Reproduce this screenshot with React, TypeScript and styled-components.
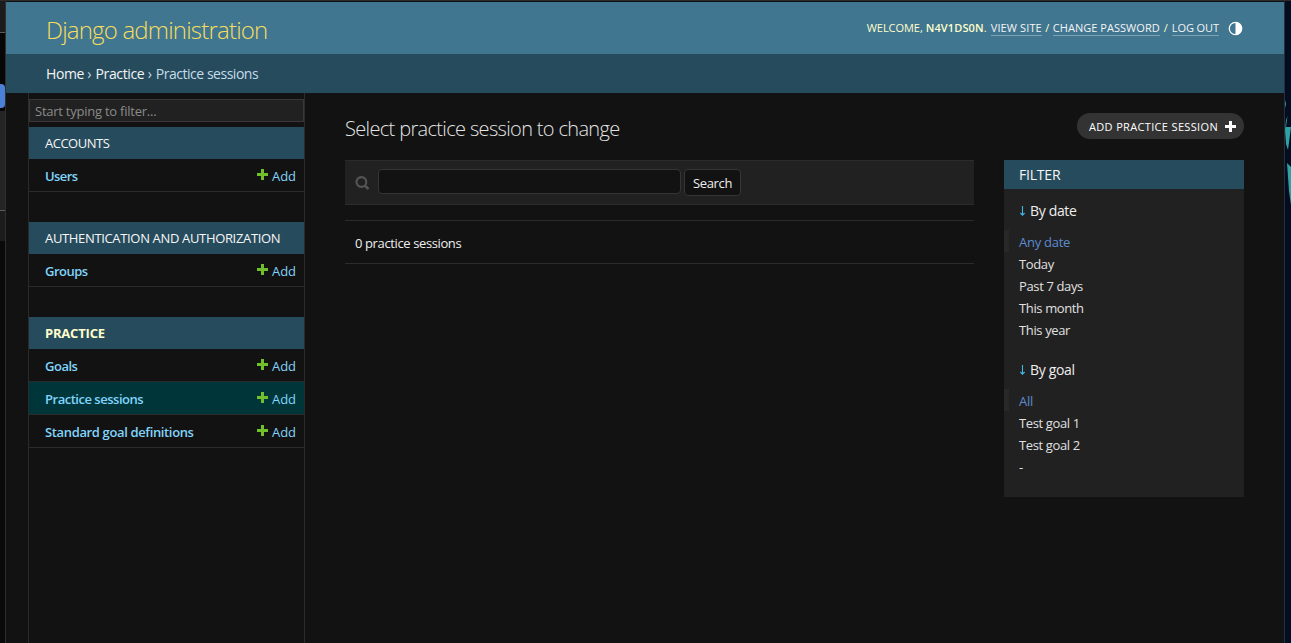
import React from "react";
import styled, { createGlobalStyle, css } from "styled-components";

const GlobalStyle = createGlobalStyle`
  *, *::before, *::after { box-sizing: border-box; }
  body {
    margin: 0;
    background: #0a0a0a;
    color: #eeeeee;
    overflow: hidden;
    font: 13px/20px "Open Sans", "Noto Sans", sans-serif;
  }
  a { color: inherit; text-decoration: none; }
  h1, h2, h3, ul, p { margin: 0; padding: 0; font-weight: 400; list-style: none; }
`;

interface Tracked {
  $ls?: number;
}
const tracking = css<Tracked>`
  letter-spacing: ${(p) => p.$ls ?? -0.37}px;
  white-space: nowrap;
`;

const Desktop = styled.div`
  display: flex;
  width: 1291px;
  height: 643px;
  border-top: 1px solid #2c2c2c;
  overflow: hidden;
`;

const LeftStrip = styled.div`
  display: flex;
  flex-direction: column;
  width: 6px;
  flex: none;
  border-right: 1px solid #2f2f2f;
`;
const StripBlock = styled.div<{ $h: number; $bg: string; $line?: boolean; $round?: boolean }>`
  height: ${(p) => p.$h}px;
  background: ${(p) => p.$bg};
  border-bottom: ${(p) => (p.$line ? "1px solid #5c5c5c" : "0")};
  border-radius: ${(p) => (p.$round ? "0 4px 4px 0" : "0")};
`;

const RightStrip = styled.div`
  width: 7px;
  flex: none;
  border-left: 1px solid #262f3a;
  background: #020d22;
`;

const Window = styled.div`
  flex: 1;
  display: flex;
  flex-direction: column;
  border-top: 1px solid #101010;
  background: #121212;
`;

const Header = styled.header`
  display: flex;
  justify-content: space-between;
  height: 52px;
  padding: 0 41px 0 40px;
  background: #417690;
`;
const SiteName = styled.h1<Tracked>`
  ${tracking}
  padding-top: 12px;
  color: #f5dd5d;
  font-size: 24px;
  line-height: 32px;
  font-weight: 300;
`;
const UserTools = styled.div`
  display: flex;
  align-items: flex-start;
  padding-top: 18px;
  color: #ffffcc;
  font-size: 11px;
  line-height: 16px;
`;
const ToolText = styled.span<Tracked & { $gap?: number }>`
  ${tracking}
  margin-right: ${(p) => p.$gap ?? 0}px;
  strong { font-weight: 600; }
`;
const Slash = styled.span<{ $width: number }>`
  width: ${(p) => p.$width}px;
  text-align: center;
`;
const ToolLink = styled.a<Tracked>`
  ${tracking}
  height: 16px;
  color: #f4f4f4;
  border-bottom: 1px solid #7fa3b5;
`;
const ThemeIcon = styled.svg`
  margin: 1px 0 0 9px;
  width: 15px;
  height: 15px;
`;

const Breadcrumbs = styled.nav`
  display: flex;
  height: 39px;
  padding: 10px 40px 0;
  background: #264b5d;
  color: #c4dce8;
  font-size: 14px;
`;
const Crumb = styled.span<Tracked & { $link?: boolean }>`
  ${tracking}
  color: ${(p) => (p.$link ? "#f4f4f4" : "inherit")};
`;
const Separator = styled.span`
  width: 11.6px;
  padding-left: 3.4px;
`;

const Body = styled.div`
  flex: 1;
  display: flex;
`;

const Sidebar = styled.aside`
  width: 277px;
  flex: none;
  margin-left: 22px;
  padding-top: 6px;
  border: solid #2b2b2b;
  border-width: 0 1px;
`;
const NavFilter = styled.input`
  display: block;
  width: 275px;
  height: 23px;
  margin-bottom: 5px;
  padding: 1px 5px 0;
  border: 1px solid #383838;
  background: #212121;
  font: inherit;
  letter-spacing: -0.24px;
  outline: none;
  &::placeholder { color: #8b8b8b; opacity: 1; }
`;
const Module = styled.section`
  margin-bottom: 30px;
`;
const ModuleTitle = styled.h2<Tracked & { $current?: boolean }>`
  ${tracking}
  height: 32px;
  padding: 6px 16px;
  background: #264b5d;
  color: ${(p) => (p.$current ? "#ffffcc" : "#f6f6f6")};
  font-size: 13px;
  font-weight: ${(p) => (p.$current ? 700 : 400)};
`;
const ModelRow = styled.li<{ $current?: boolean }>`
  display: flex;
  justify-content: space-between;
  height: 33px;
  padding: 7px 8px 0 16px;
  border-bottom: 1px solid #2b2b2b;
  background: ${(p) => (p.$current ? "#00363a" : "transparent")};
  color: #81d4fa;
`;
const ModelLink = styled.a<Tracked>`
  ${tracking}
  font-weight: 600;
`;
const AddLink = styled.a`
  display: flex;
  gap: 4px;
  letter-spacing: -0.05px;
`;
const AddIcon = styled.svg`
  width: 11px;
  height: 11px;
  margin-top: 3px;
`;

const Main = styled.main`
  flex: 1;
  padding: 20px 40px 0;
`;
const TitleRow = styled.div`
  display: flex;
  justify-content: space-between;
  height: 47px;
`;
const PageTitle = styled.h2<Tracked>`
  ${tracking}
  padding-top: 2.5px;
  color: #e4e4e4;
  font-size: 20px;
  line-height: 26px;
  font-weight: 300;
`;
const AddButton = styled.a`
  display: flex;
  align-items: center;
  justify-content: space-between;
  width: 167px;
  height: 26px;
  padding: 1px 8px 0 12px;
  border-radius: 13px;
  background: #333333;
  color: #ffffff;
  font-size: 11px;
  letter-spacing: 0.34px;
`;
const PlusIcon = styled.svg`
  width: 11px;
  height: 11px;
  margin-top: -1px;
`;
const Columns = styled.div`
  display: flex;
  align-items: flex-start;
  gap: 30px;
`;
const Results = styled.div`
  width: 629px;
`;
const Toolbar = styled.form`
  display: flex;
  align-items: flex-start;
  height: 45px;
  margin-bottom: 15px;
  padding: 8px 10px;
  border: solid #2b2b2b;
  border-width: 1px 0;
  background: #212121;
`;
const SearchIcon = styled.svg`
  width: 15px;
  height: 15px;
  margin: 7px 8px 0 0;
`;
const SearchInput = styled.input`
  width: 303px;
  height: 25px;
  margin-right: 3px;
  border: 1px solid #353535;
  border-radius: 4px;
  background: #121212;
`;
const SearchButton = styled.button`
  width: 57px;
  height: 27px;
  padding: 0;
  border: 1px solid #353535;
  border-radius: 4px;
  background: #121212;
  color: #eeeeee;
  font: inherit;
  letter-spacing: -0.36px;
`;
const Paginator = styled.p<Tracked>`
  ${tracking}
  height: 44px;
  padding: 12px 10px 0;
  border: solid #2b2b2b;
  border-width: 1px 0;
`;

const FilterPanel = styled.aside`
  width: 240px;
  height: 337px;
  background: #212121;
`;
const FilterTitle = styled.h2<Tracked>`
  ${tracking}
  height: 29px;
  padding: 5px 15px;
  background: #264b5d;
  color: #f6f6f6;
  font-size: 14px;
`;
const FilterGroup = styled.section`
  padding-top: 12px;
  margin-bottom: 8px;
`;
const FilterHeading = styled.h3<Tracked>`
  ${tracking}
  display: flex;
  gap: 4px;
  padding-left: 15px;
  margin-bottom: 9px;
  font-size: 14px;
`;
const ArrowIcon = styled.svg`
  width: 7px;
  height: 10px;
  margin-top: 5px;
`;
const FilterOption = styled.li<Tracked & { $selected?: boolean }>`
  ${tracking}
  height: 22px;
  padding: 2px 0 0 10px;
  border-left: 5px solid ${(p) => (p.$selected ? "#282828" : "transparent")};
  color: ${(p) => (p.$selected ? "#5d8bd0" : "#e0e0e0")};
`;

const Plus = () => <path d="M4 0h3v4h4v3H7v4H4V7H0V4h4z" />;

interface Model {
  name: string;
  ls: number;
  current?: boolean;
}
interface AppModule {
  title: string;
  ls: number;
  current?: boolean;
  models: Model[];
}
const modules: AppModule[] = [
  { title: "ACCOUNTS", ls: -0.5, models: [{ name: "Users", ls: -0.6 }] },
  { title: "AUTHENTICATION AND AUTHORIZATION", ls: -0.34, models: [{ name: "Groups", ls: -0.5 }] },
  {
    title: "PRACTICE",
    ls: -0.2,
    current: true,
    models: [
      { name: "Goals", ls: -0.48 },
      { name: "Practice sessions", ls: -0.48, current: true },
      { name: "Standard goal definitions", ls: -0.36 },
    ],
  },
];
const filters = [
  { title: "By date", options: ["Any date", "Today", "Past 7 days", "This month", "This year"] },
  { title: "By goal", options: ["All", "Test goal 1", "Test goal 2", "-"] },
];

export default function App() {
  return (
    <>
      <GlobalStyle />
      <Desktop>
        <LeftStrip>
          <StripBlock $h={32} $bg="#1c1c1c" $line />
          <StripBlock $h={51} $bg="#070707" />
          <StripBlock $h={24} $bg="#4a80d8" $round />
          <StripBlock $h={3} $bg="#070707" />
          <StripBlock $h={100} $bg="#252525" $line />
          <StripBlock $h={30} $bg="#1c1c1c" />
        </LeftStrip>
        <Window>
          <Header>
            <SiteName $ls={-0.8}>Django administration</SiteName>
            <UserTools>
              <ToolText $ls={-0.04} $gap={3}>WELCOME,</ToolText>
              <ToolText $ls={0.12} $gap={4}><strong>N4V1DS0N</strong>.</ToolText>
              <ToolLink $ls={0.11}>VIEW SITE</ToolLink>
              <Slash $width={11}>/</Slash>
              <ToolLink $ls={0.04}>CHANGE PASSWORD</ToolLink>
              <Slash $width={12}>/</Slash>
              <ToolLink $ls={-0.08}>LOG OUT</ToolLink>
              <ThemeIcon viewBox="0 0 15 15">
                <circle cx="7.5" cy="7.5" r="6.2" fill="none" stroke="#fff" strokeWidth="1.3" />
                <path d="M7.5 1a6.5 6.5 0 0 1 0 13z" fill="#fff" />
              </ThemeIcon>
            </UserTools>
          </Header>
          <Breadcrumbs>
            <Crumb $link $ls={-0.4}>Home</Crumb>
            <Separator>›</Separator>
            <Crumb $link $ls={-0.38}>Practice</Crumb>
            <Separator>›</Separator>
            <Crumb $ls={-0.48}>Practice sessions</Crumb>
          </Breadcrumbs>
          <Body>
            <Sidebar>
              <NavFilter placeholder="Start typing to filter..." />
              {modules.map((m) => (
                <Module key={m.title}>
                  <ModuleTitle $ls={m.ls} $current={m.current}>{m.title}</ModuleTitle>
                  <ul>
                    {m.models.map((model) => (
                      <ModelRow key={model.name} $current={model.current}>
                        <ModelLink $ls={model.ls}>{model.name}</ModelLink>
                        <AddLink>
                          <AddIcon viewBox="0 0 11 11" fill="#70bf2b"><Plus /></AddIcon>
                          Add
                        </AddLink>
                      </ModelRow>
                    ))}
                  </ul>
                </Module>
              ))}
            </Sidebar>
            <Main>
              <TitleRow>
                <PageTitle $ls={-0.66}>Select practice session to change</PageTitle>
                <AddButton>
                  ADD PRACTICE SESSION
                  <PlusIcon viewBox="0 0 11 11" fill="#fff"><Plus /></PlusIcon>
                </AddButton>
              </TitleRow>
              <Columns>
                <Results>
                  <Toolbar>
                    <SearchIcon viewBox="0 0 15 15" fill="none" stroke="#555" strokeWidth="2.1">
                      <circle cx="6.4" cy="6" r="4.9" />
                      <path d="M9.9 9.5l3.6 3.6" strokeWidth="2.5" />
                    </SearchIcon>
                    <SearchInput />
                    <SearchButton type="button">Search</SearchButton>
                  </Toolbar>
                  <Paginator $ls={-0.38}>0 practice sessions</Paginator>
                </Results>
                <FilterPanel>
                  <FilterTitle $ls={-0.2}>FILTER</FilterTitle>
                  {filters.map((f) => (
                    <FilterGroup key={f.title}>
                      <FilterHeading $ls={-0.34}>
                        <ArrowIcon viewBox="0 0 7 10" fill="none" stroke="#3fb8e4" strokeWidth="1.1">
                          <path d="M3.5 0v9M1.4 7l2.1 2.1L5.6 7" />
                        </ArrowIcon>
                        {f.title}
                      </FilterHeading>
                      <ul>
                        {f.options.map((o, i) => (
                          <FilterOption key={o} $selected={i === 0} $ls={i === 0 ? -0.26 : -0.37}>{o}</FilterOption>
                        ))}
                      </ul>
                    </FilterGroup>
                  ))}
                </FilterPanel>
              </Columns>
            </Main>
          </Body>
        </Window>
        <RightStrip>
          <svg width="6" height="642" viewBox="0 0 6 642" fill="#2fa3a3">
            <path d="M0 99l1 4-1 4zM2.5 115L1 126h5l-3 23-2-6-1-14 1-10zM2 162l4 4v38L4 190z" />
          </svg>
        </RightStrip>
      </Desktop>
    </>
  );
}
